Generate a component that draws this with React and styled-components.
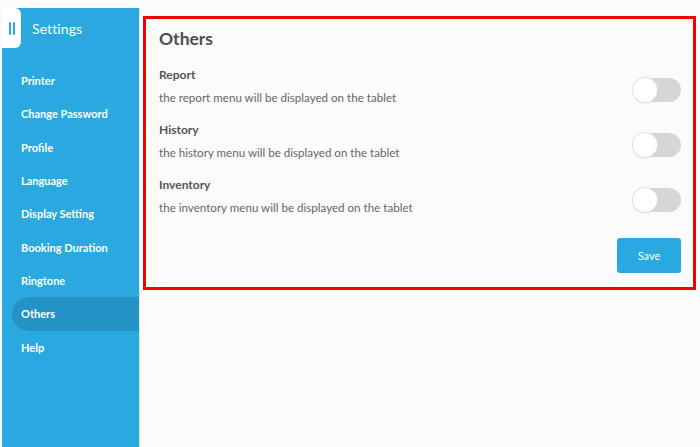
import React, { useState } from 'react';
import styled, { createGlobalStyle } from 'styled-components';

const GlobalStyle = createGlobalStyle`
  html, body {
    margin: 0;
    padding: 0;
    background: #fbfbfb;
    font-family: Lato, "Noto Sans", sans-serif;
  }
`;

const Page = styled.div`
  display: flex;
  align-items: flex-start;
  width: 700px;
  height: 447px;
  overflow: hidden;
  background: #fbfbfb;
`;

const Sidebar = styled.nav`
  flex: 0 0 137px;
  height: 439px;
  margin: 8px 0 0 2px;
  background: #29a9df;
  display: flex;
  flex-direction: column;
  border-right: 1px solid #e4e4e4;
`;

const SideHeader = styled.div`
  display: flex;
  align-items: center;
  height: 40px;
  margin-bottom: 16px;
`;

const MenuTab = styled.div`
  width: 19px;
  height: 40px;
  background: #fff;
  border-radius: 0 6px 6px 0;
  display: flex;
  align-items: center;
  justify-content: center;
  gap: 2px;
`;

const Bar = styled.span`
  width: 2px;
  height: 13px;
  background: #29a9df;
  border-radius: 1px;
`;

const SideTitle = styled.span`
  margin-left: 11px;
  color: #fff;
  font-size: 14px;
  letter-spacing: 0.1px;
`;

const SideItem = styled.div`
  height: 33.33px;
  display: flex;
  align-items: center;
  margin-left: 10px;
  padding-left: 9px;
  border-radius: 17px 0 0 17px;
  color: #fff;
  font-size: 11px;
  font-weight: 700;
  background: ${p => (p.$active ? '#2393c6' : 'transparent')};
`;

const Main = styled.main`
  flex: 1;
  padding: 16px 4px 0 3px;
`;

const Card = styled.section`
  border: 3px solid #f40000;
  padding: 8px 12px 14px 13px;
  display: flex;
  flex-direction: column;
`;

const Title = styled.h2`
  margin: 0 0 16px;
  font-size: 17.5px;
  line-height: 24px;
  font-weight: 700;
  color: #4d4d4d;
`;

const Row = styled.div`
  display: flex;
  align-items: flex-end;
  justify-content: space-between;
  margin-bottom: 16px;
`;

const RowText = styled.div`
  display: flex;
  flex-direction: column;
  gap: 7px;
`;

const Label = styled.span`
  font-size: 12px;
  line-height: 16px;
  font-weight: 700;
  color: #555;
`;

const Desc = styled.span`
  font-size: 11.6px;
  line-height: 16px;
  color: #666;
`;

const Toggle = styled.button`
  width: 48px;
  height: 24px;
  margin-bottom: 4px;
  padding: 0;
  border: none;
  border-radius: 12px;
  background: ${p => (p.$on ? '#29a9df' : '#d6d6d6')};
  position: relative;
  cursor: pointer;

  &::after {
    content: '';
    position: absolute;
    top: 0;
    left: ${p => (p.$on ? '24px' : '0')};
    width: 24px;
    height: 24px;
    border-radius: 50%;
    background: #fff;
    box-shadow: 0 0 0 1px #e0e0e0, 0 1px 2px rgba(0, 0, 0, 0.15);
  }
`;

const Actions = styled.div`
  display: flex;
  justify-content: flex-end;
  margin-top: 6px;
`;

const SaveButton = styled.button`
  width: 64px;
  height: 35px;
  border: none;
  border-radius: 3px;
  background: #29a9df;
  color: #fff;
  font-family: inherit;
  font-size: 11px;
`;

const menu = [
  'Printer',
  'Change Password',
  'Profile',
  'Language',
  'Display Setting',
  'Booking Duration',
  'Ringtone',
  'Others',
  'Help',
];

const options = [
  { key: 'report', label: 'Report' },
  { key: 'history', label: 'History' },
  { key: 'inventory', label: 'Inventory' },
];

export default function App() {
  const [flags, setFlags] = useState({ report: false, history: false, inventory: false });

  return (
    <>
      <GlobalStyle />
      <Page>
        <Sidebar>
          <SideHeader>
            <MenuTab>
              <Bar />
              <Bar />
            </MenuTab>
            <SideTitle>Settings</SideTitle>
          </SideHeader>
          {menu.map(m => (
            <SideItem key={m} $active={m === 'Others'}>
              {m}
            </SideItem>
          ))}
        </Sidebar>
        <Main>
          <Card>
            <Title>Others</Title>
            {options.map(o => (
              <Row key={o.key}>
                <RowText>
                  <Label>{o.label}</Label>
                  <Desc>the {o.key} menu will be displayed on the tablet</Desc>
                </RowText>
                <Toggle
                  $on={flags[o.key]}
                  onClick={() => setFlags(f => ({ ...f, [o.key]: !f[o.key] }))}
                />
              </Row>
            ))}
            <Actions>
              <SaveButton>Save</SaveButton>
            </Actions>
          </Card>
        </Main>
      </Page>
    </>
  );
}
